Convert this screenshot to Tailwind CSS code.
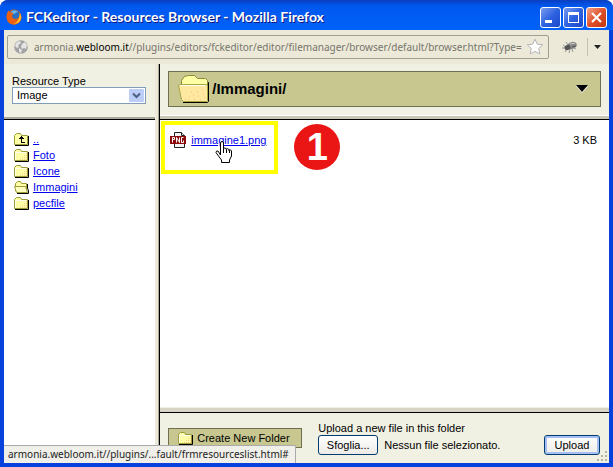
<!DOCTYPE html>
<html lang="en">
<head>
    <meta charset="utf-8">
    <title>FCKeditor - Resources Browser</title>
    <script src="https://cdn.jsdelivr.net/npm/@tailwindcss/browser@4"></script>
</head>
<body class="h-screen overflow-hidden bg-white font-['Liberation_Sans',Arial,sans-serif] text-[11px] leading-4 text-black">

<!-- Icons shared by the folder list and the toolbar -->
<svg class="hidden">
    <symbol id="folder" viewBox="0 0 15 14">
        <path d="M.5 12.500V3.500L2.500 1.500h4l1 2h6v9z" fill="#ffffa5" stroke="#9c9c3a"/>
        <path d="M1.500 11.500V4.500h11" fill="none" stroke="#fffff0"/>
        <path d="M6 11h1v1H6zM8 9h1v1H8zM10 7h1v1h-1zM10 11h1v1h-1zM12 5h1v1h-1zM12 9h1v1h-1zM8 11h1v1H8zM10 9h1v1h-1zM12 7h1v1h-1zM12 11h1v1h-1z" fill="#ffc890"/>
        <path d="M14.500 4v9.500H1" fill="none" stroke="#000"/>
    </symbol>
    <symbol id="folder-up" viewBox="0 0 15 14">
        <path d="M.5 12.500V3.500L2.500 1.500h4l1 2h6v9z" fill="#ffffa5" stroke="#9c9c3a"/>
        <path d="M14.500 4v9.500H1" fill="none" stroke="#000"/>
        <path d="M7 4h1v1h1v1h1v1H8v3h3v1H7V7H5V6h1V5h1z" fill="#000"/>
    </symbol>
    <symbol id="folder-open" viewBox="0 0 15 14">
        <path d="M1.500 11V3.500L3.500 1.500h3l1 2h5v8z" fill="#ffffa5" stroke="#9c9c3a"/>
        <path d="M.5 6.500h11l2 6H2.500z" fill="#ffffc0" stroke="#9c9c3a"/>
        <path d="M13.500 4v4l1 3v2.500H3" fill="none" stroke="#000"/>
    </symbol>
</svg>

<div class="flex h-full flex-col overflow-hidden rounded-t-lg bg-[#0842dc]">
    <!-- Title bar -->
    <header class="flex h-[30px] shrink-0 items-center bg-linear-to-b from-[#0a3ec0] via-[#0058ee] via-20% to-[#0062fa] pt-1 pr-1.5 pl-1.5">
        <svg class="size-4 shrink-0" viewBox="0 0 16 16">
            <circle cx="8" cy="8" r="7.500" fill="#e66000"/>
            <circle cx="8.500" cy="6.500" r="5.500" fill="#2b6fc0"/>
            <path d="M5 3c2-2 5-2 7 0-2 0-3 1-3 2-2 0-3-1-4-2z" fill="#6ab8ea"/>
            <path d="M.6 7C.6 4 2 2 3 1.500c0 1 .4 1.600 1 2 1.500 0 2.500.4 3.500 1.500L6 6.500c0 3 2 4 5 3.200 2-.7 3-3 2.500-5.700 2.500 3 2.500 7-.5 9.800-3 2.500-7.500 2.400-10.200-.3C1.200 12 .6 9.500.6 7z" fill="#ea6010"/>
            <path d="M13.800 4c2 3 1.500 7-1 9-2 1.600-4 1.800-6 1.300 4 0 7-3.300 7-10.300z" fill="#ffcb2d"/>
        </svg>
        <h1 class="ml-1 grow truncate font-[Lato,sans-serif] text-[14px] font-bold text-white text-shadow-[1px_1px_0_#0a1883]">FCKeditor - Resources Browser - Mozilla Firefox</h1>
        <div class="flex gap-0.5">
            <button aria-label="Minimize" class="size-[21px] rounded-[3px] border border-white bg-linear-to-br from-[#7a9cf0] via-[#2e62e0] to-[#1c48c8]">
                <svg viewBox="0 0 19 19"><path d="M4 12h7v3H4z" fill="#fff"/></svg>
            </button>
            <button aria-label="Maximize" class="size-[21px] rounded-[3px] border border-white bg-linear-to-br from-[#7a9cf0] via-[#2e62e0] to-[#1c48c8]">
                <svg viewBox="0 0 19 19"><path d="M4 4h11v11H4zM5 7v7h9V7z" fill="#fff" fill-rule="evenodd"/></svg>
            </button>
            <button aria-label="Close" class="size-[21px] rounded-[3px] border border-white bg-linear-to-br from-[#f0a088] via-[#e0502a] to-[#c03810]">
                <svg viewBox="0 0 19 19"><path d="M5 5l9 9M14 5l-9 9" stroke="#fff" stroke-width="2.200"/></svg>
            </button>
        </div>
    </header>

    <div class="relative flex min-h-0 grow flex-col border-x-4 border-b-4 border-[#0842dc] bg-[#ece9d8]">
        <!-- Address bar -->
        <div class="flex h-[34px] shrink-0 items-center pr-2 pl-[3px]">
            <div class="flex h-6 min-w-0 grow items-center rounded-xs border border-[#a09d92] pr-1 pl-1.5">
                <svg class="size-[14px] shrink-0" viewBox="0 0 14 14">
                    <circle cx="7" cy="7" r="6.800" fill="#a3a3a3"/>
                    <path d="M2 3l3-2 2 1-1 2-2 1 1 2-2 1-2-2zM8 4l3-2 2 3-1 4-2-1-2 1-1-2zM5 8l3 2-1 3-2-1z" fill="#e4e4e4"/>
                </svg>
                <p class="ml-1.5 grow font-['Noto_Sans',sans-serif] text-[10px] whitespace-nowrap text-[#77756c]">armonia.<span class="text-black">webloom.it</span>//plugins/editors/fckeditor/editor/filemanager/browser/default/browser.html?Type=</p>
                <svg class="size-[18px] shrink-0" viewBox="0 0 18 18"><path d="M9 1.200l2.300 5 5.400.6-4 3.700 1.100 5.500L9 13.300 4.200 16l1.100-5.500-4-3.700 5.400-.6z" fill="#fff" stroke="#b4b4b4"/></svg>
            </div>
            <button aria-label="Firebug" class="ml-3">
                <svg class="h-4 w-[18px]" viewBox="0 0 18 16">
                    <path d="M2 6l3 2M1 9h4M4 13l2-3M8 14l1-4M12 13l-1-3M15 10l-2-1M5 3l2 3" stroke="#999" fill="none"/>
                    <ellipse cx="11" cy="6.500" rx="5" ry="3.500" transform="rotate(-18 11 6.500)" fill="#888"/>
                    <ellipse cx="6.500" cy="8.500" rx="3" ry="2.600" transform="rotate(-25 6.500 8.500)" fill="#555"/>
                    <path d="M9 5l5-1" stroke="#ccc"/><path d="M11 8l4-1" stroke="#555"/>
                </svg>
            </button>
            <span class="ml-2 h-[18px] w-px bg-[#c5c2b2]"></span>
            <button aria-label="More tools" class="ml-1.5"><svg class="h-1 w-[7px]" viewBox="0 0 7 4"><path d="M0 0h7L3.500 4z" fill="#222"/></svg></button>
        </div>

        <div class="flex min-h-0 grow">
            <!-- Left frames: resource type and folder list -->
            <div class="flex w-1/4 flex-col">
                <form class="h-[53px] shrink-0 bg-[#f1f1e3] pt-[9px] pr-2 pl-2">
                    <label for="type" class="block h-3.5 leading-4">Resource Type</label>
                    <div class="relative mr-px">
                        <select id="type" class="block h-[17px] w-full appearance-none border border-[#7f9db9] bg-white pl-1 leading-[15px]">
                            <option>Image</option>
                        </select>
                        <svg class="pointer-events-none absolute top-0.5 right-0.5 h-[13px] w-[15px]" viewBox="0 0 15 13">
                            <rect width="15" height="13" rx="1" fill="#bccdf8"/>
                            <path d="M4 4.500l3.500 3.500L11 4.500" fill="none" stroke="#4d6185" stroke-width="2"/>
                        </svg>
                    </div>
                </form>
                <div class="h-[3px] shrink-0 border-b border-black bg-[#aca899]"></div>
                <nav class="grow bg-white pt-[11px] pl-2.5">
                    <ul class="text-[#0000ee]">
                        <li class="flex h-4 items-center gap-1"><svg class="h-3.5 w-[15px]"><use href="#folder-up"/></svg><a href="#" class="underline">..</a></li>
                        <li class="flex h-4 items-center gap-1"><svg class="h-3.5 w-[15px]"><use href="#folder"/></svg><a href="#" class="underline">Foto</a></li>
                        <li class="flex h-4 items-center gap-1"><svg class="h-3.5 w-[15px]"><use href="#folder"/></svg><a href="#" class="underline">Icone</a></li>
                        <li class="flex h-4 items-center gap-1"><svg class="h-3.5 w-[15px]"><use href="#folder-open"/></svg><a href="#" class="underline">Immagini</a></li>
                        <li class="flex h-4 items-center gap-1"><svg class="h-3.5 w-[15px]"><use href="#folder"/></svg><a href="#" class="underline">pecfile</a></li>
                    </ul>
                </nav>
            </div>
            <div class="w-1 shrink-0 border-r border-[#aca899] bg-[#ece9d8]"></div>

            <!-- Right frames: current folder, files, upload -->
            <main class="flex min-w-0 grow flex-col border-l border-black">
                <div class="h-[51px] shrink-0 bg-[#f1f1e3] px-2 pt-[7px]">
                    <div class="flex h-9 items-center border border-[#6f6f52] bg-[#c7c78f] pr-3 pl-[9px]">
                        <svg class="h-7 w-[34px] shrink-0" viewBox="0 0 34 28">
                            <path d="M3.500 24V5.500l3-4 4-1h6l3 3h8l2 2V24z" fill="#ffffa5" stroke="#8c8c3a"/>
                            <path d="M.5 10.500l2-1h26l1 2v14l-1 1h-23l-2-2z" fill="#ffe9a0" stroke="#a5a542"/>
                            <path d="M2 10.500h26" stroke="#fffff0"/>
                            <path d="M7 24h1M11 22h1M10 25h1M15 20h1M16 24h1M19 17h1M20 21h1M22 25h1M24 15h1M25 19h1M26 23h1M13 17h1" stroke="#ffb878"/>
                            <path d="M30 7.500h.5v19l-1 1H5" fill="none" stroke="#000"/>
                        </svg>
                        <h2 class="grow text-[15px] font-bold">/Immagini/</h2>
                        <svg class="h-2 w-3" viewBox="0 0 12 8"><path d="M0 1h12L6 8z" fill="#fff"/><path d="M0 0h12L6 7z" fill="#000"/></svg>
                    </div>
                </div>
                <div class="h-[5px] shrink-0 border-t border-b border-t-white border-b-black bg-[#c9c6b5]"></div>

                <div class="relative grow bg-white">
                    <table class="mt-3 w-full">
                        <tr>
                            <td class="w-[31px] pl-2.5">
                                <svg class="size-4" viewBox="0 0 16 16">
                                    <path d="M4.500.5h7l3 3v12h-10z" fill="#f4f4f4" stroke="#222"/>
                                    <path d="M11.500.5v3h3" fill="#ddd" stroke="#222"/>
                                    <rect y="4" width="16" height="8" fill="#8c0a0a"/>
                                    <path d="M2.500 10.500V5.500h2v2h-2M6.500 10.500v-5l3 5v-5M13.500 5.500h-2v5h2V8.500" fill="none" stroke="#fff"/>
                                </svg>
                            </td>
                            <td><a href="#" class="text-[#0000ee] underline">immagine1.png</a></td>
                            <td class="pr-3 text-right">3 KB</td>
                        </tr>
                    </table>
                    <!-- Tutorial marks drawn over the list -->
                    <div class="absolute top-px left-px h-[53px] w-[117px] border-4 border-[#ffff00]"></div>
                    <div class="absolute top-1 left-[134px] flex size-[46px] items-center justify-center rounded-full bg-[#ea1515] text-[38px] font-bold text-white">1</div>
                    <svg class="absolute top-[21px] left-[55px] h-[22px] w-[17px]" viewBox="0 0 17 22">
                        <path d="M5.500 14V2q0-1.500 1.500-1.500T8.500 2v6q0-1 1.300-1t1.500 1.500q0-1 1.300-.8t1.400 1.800q0-1 1-.8t1.500 1.300v5l-2 4v2.500h-8V19l-3-4-2.500-3.500q0-2 2-1.500z" fill="#fff" stroke="#000"/>
                        <path d="M8.500 8v4M11.500 8.500V12M14.500 9.500V12" stroke="#000"/>
                    </svg>
                </div>

                <div class="h-1.5 shrink-0 border-t border-b border-t-[#f1efe2] border-b-black bg-[#d8d5c5]"></div>
                <form class="flex h-[50px] shrink-0 items-start bg-[#f1f1e3] px-2 pt-2">
                    <button type="button" class="mt-[7px] flex h-5 w-[134px] items-center gap-1 border border-[#6f6f52] bg-[#c7c78f] pl-[9px] whitespace-nowrap"><svg class="h-3.5 w-[15px]"><use href="#folder"/></svg>Create New Folder</button>
                    <div class="ml-4 grow">
                        <label for="file" class="block h-3.5 leading-3.5">Upload a new file in this folder</label>
                        <div class="flex items-center gap-1.5">
                            <button id="file" type="button" class="h-5 w-[60px] rounded-[3px] border border-[#003c74] bg-linear-to-b from-white to-[#ecebe6]">Sfoglia...</button>
                            <span>Nessun file selezionato.</span>
                        </div>
                    </div>
                    <button type="button" class="mt-3.5 mr-px h-5 w-14 rounded-[3px] border border-[#003c74] bg-linear-to-b from-white to-[#ecebe6] inset-ring-2 inset-ring-[#a6bff2]">Upload</button>
                </form>
            </main>
        </div>

        <!-- Link target shown by the browser -->
        <div class="absolute bottom-0 left-0 h-[18px] rounded-tr-xs border-t border-r border-[#aaa] bg-[#f0efea] pr-1.5 pl-1 font-['Noto_Sans',sans-serif] text-[10px] whitespace-nowrap text-[#222]">armonia.webloom.it//plugins/...fault/frmresourceslist.html#</div>
        <svg class="absolute right-0.5 bottom-0.5 size-2.5" viewBox="0 0 10 10"><path d="M8 0h2v2H8zM4 4h2v2H4zM8 4h2v2H8zM0 8h2v2H0zM4 8h2v2H4zM8 8h2v2H8z" fill="#b8b4a2"/></svg>
    </div>
</div>
</body>
</html>
